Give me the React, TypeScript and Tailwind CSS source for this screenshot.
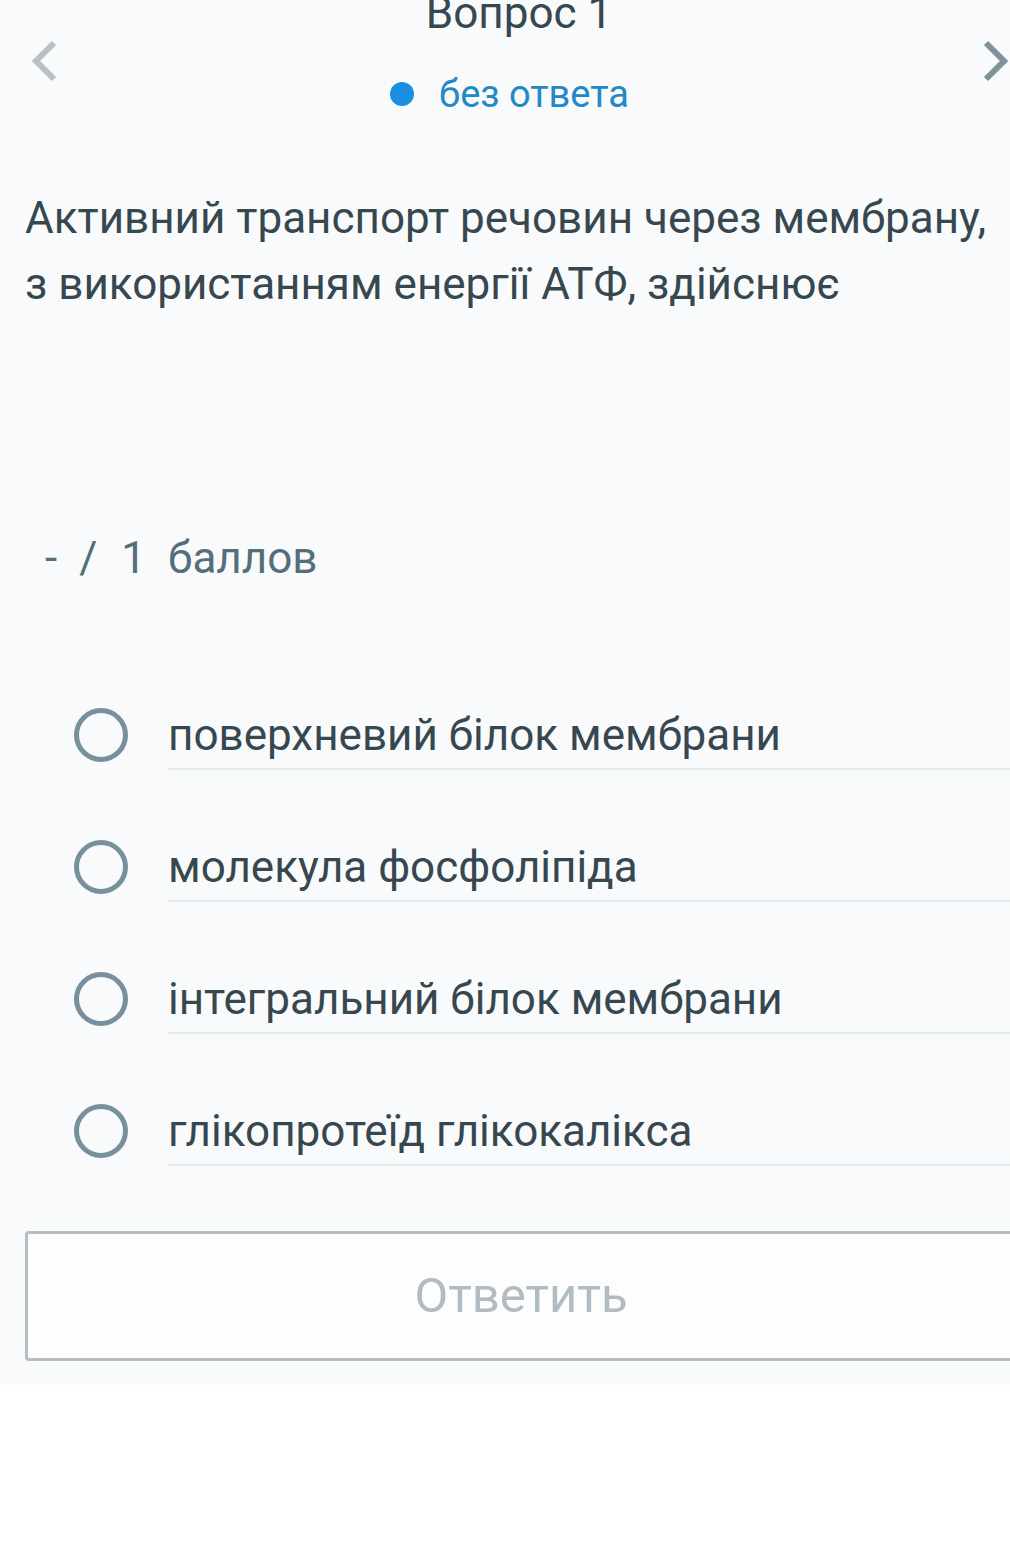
import React from 'react'

const options = [
  'поверхневий білок мембрани',
  'молекула фосфоліпіда',
  'інтегральний білок мембрани',
  'глікопротеїд глікокалікса',
]

function Chevron({ dir, color }: { dir: 'left' | 'right'; color: string }) {
  const points = dir === 'left' ? '23,3 5,21 23,39' : '5,3 23,21 5,39'
  return (
    <svg width="28" height="42" viewBox="0 0 28 42" fill="none">
      <polyline points={points} stroke={color} strokeWidth="6" strokeLinejoin="miter" />
    </svg>
  )
}

export default function App() {
  return (
    <div className="min-h-[1543px] bg-white overflow-hidden" style={{ fontFamily: 'Roboto, "Noto Sans", sans-serif' }}>
      <div className="bg-[#f8fafb] pb-[24px]">
        {/* Header */}
        <header className="flex items-start h-[122px]">
          <div className="w-[90px] pt-[40px] pl-[31px]">
            <Chevron dir="left" color="#b6c1c6" />
          </div>
          <div className="flex-1 flex flex-col items-center">
            <div className="-mt-[9px] pl-[28px] text-[44px] leading-[44px] text-[#37474f]">Вопрос 1</div>
            <div className="mt-[39px] pl-[9px] flex items-center h-[40px]">
              <span className="w-[24px] h-[24px] rounded-full bg-[#1a8ee0]" />
              <span className="ml-[25px] text-[38px] leading-[40px] text-[#2389c6]">без ответа</span>
            </div>
          </div>
          <div className="w-[90px] pt-[40px] flex justify-end pr-[1px]">
            <Chevron dir="right" color="#7f9199" />
          </div>
        </header>

        {/* Question */}
        <p className="mt-[63px] pl-[25px] text-[44px] leading-[66px] text-[#37474f] whitespace-nowrap">
          Активний транспорт речовин через мембрану,
          <br />
          з використанням енергії АТФ, здійснює
        </p>

        {/* Points */}
        <div className="mt-[216px] pl-[45px] flex items-center text-[44px] leading-[50px] text-[#546e7a]">
          <span>-</span>
          <span className="ml-[22px]">/</span>
          <span className="ml-[24px]">1</span>
          <span className="ml-[22px]">баллов</span>
        </div>

        {/* Options */}
        <div className="mt-[55px]">
          {options.map((o) => (
            <div key={o} className="flex items-start pt-[72px]">
              <span className="ml-[74px] -mt-[2px] w-[54px] h-[54px] rounded-full border-[5px] border-[#78909c] shrink-0" />
              <div className="ml-[40px] flex-1 pb-[8px] border-b-2 border-[#e5eaed] text-[44px] leading-[50px] text-[#37474f]">
                {o}
              </div>
            </div>
          ))}
        </div>

        {/* Submit */}
        <div className="mt-[65px] pl-[25px]">
          <button className="w-[992px] h-[130px] rounded-[4px] border-[3px] border-[#b5bfc2] bg-[#fdfdfd] text-[49px] text-[#b0bcc1]">
            Ответить
          </button>
        </div>
      </div>
    </div>
  )
}
